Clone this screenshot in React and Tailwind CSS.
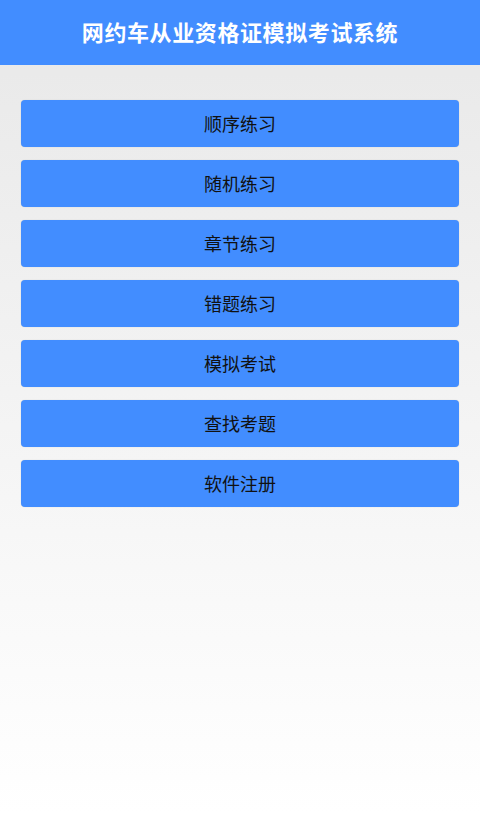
const items = ["顺序练习", "随机练习", "章节练习", "错题练习", "模拟考试", "查找考题", "软件注册"];

const App = () => {
    return (
        <div
            className="min-h-[813px] flex flex-col bg-gradient-to-b from-[#e8e8e8] to-[#ffffff]"
            style={{ fontFamily: '"Noto Sans CJK SC", "Noto Sans", sans-serif' }}
        >
            <div className="h-[65px] bg-[#428dff] flex items-center justify-center pb-[3px]">
                <h1 className="text-[22px] font-bold text-white tracking-[0.6px]">网约车从业资格证模拟考试系统</h1>
            </div>
            <div className="flex flex-col gap-[13px] px-[21px] pt-[35px]">
                {items.map((item) => (
                    <button
                        key={item}
                        className="h-[47px] w-full rounded-[4px] bg-[#428dff] text-[18px] text-[#111] shadow-[0_0_1px_rgba(0,0,0,0.2)]"
                    >
                        {item}
                    </button>
                ))}
            </div>
        </div>
    );
};

export default App;
